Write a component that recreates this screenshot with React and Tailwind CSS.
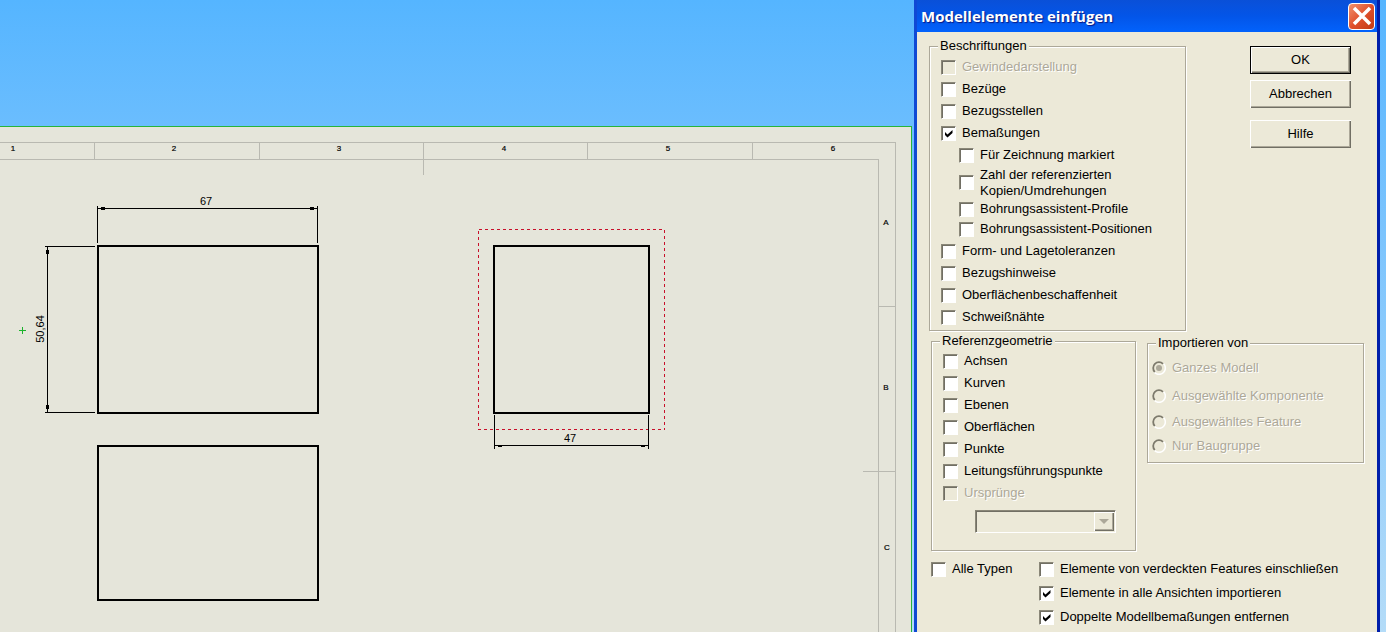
import React from 'react';

const raised = 'bg-[#ece9d8] shadow-[inset_1px_1px_0_#ffffff,inset_-1px_-1px_0_#716f64,inset_-2px_-2px_0_#aca899]';

const CheckRow = ({ id, label, checked, disabled, className = 'h-[22px]' }) => (
  <div className={`flex items-center gap-1.5 ${className}`}>
    <span className="relative flex shrink-0">
      <input
        id={id}
        type="checkbox"
        defaultChecked={checked}
        disabled={disabled}
        className="peer size-[15px] appearance-none border border-t-[#8a8778] border-l-[#8a8778] border-r-white border-b-white bg-white shadow-[inset_1px_1px_0_#716f64] disabled:bg-[#ece9d8]"
      />
      <svg viewBox="0 0 15 15" className="pointer-events-none absolute inset-0 hidden size-[15px] peer-checked:block">
        <path d="M4 6v3l2.500 2.500L11.500 7V4L6.500 8.500Z" fill="#000" />
      </svg>
    </span>
    <label
      htmlFor={id}
      className={disabled ? 'text-[#aca899] [text-shadow:1px_1px_0_#fff]' : 'text-black'}
    >
      {label}
    </label>
  </div>
);

const RadioRow = ({ id, label, checked, className }) => (
  <div className={`flex items-center gap-1.5 ${className}`}>
    <span className="relative flex shrink-0">
      <input id={id} name="import" type="radio" defaultChecked={checked} disabled className="peer size-3.5 appearance-none rounded-full" />
      <svg viewBox="0 0 14 14" className="pointer-events-none absolute inset-0 size-3.5" fill="none">
        <path d="M11.500 2.500A6.200 6.200 0 0 1 2.500 11.500" stroke="#fff" strokeWidth="1.500" />
        <path d="M2.800 11A5.800 5.800 0 0 1 11 2.800" stroke="#7d7a6c" strokeWidth="1.800" />
        {checked && <circle cx="7" cy="7" r="3" fill="#aca899" />}
      </svg>
    </span>
    <label htmlFor={id} className="text-[#aca899] [text-shadow:1px_1px_0_#fff]">{label}</label>
  </div>
);

const Group = ({ title, className, children }) => (
  <fieldset className={`border border-[#aca899] shadow-[1px_1px_0_#fff,inset_1px_1px_0_#fff] ${className}`}>
    <legend className="ml-2 bg-[#ece9d8] px-0.5 leading-4">{title}</legend>
    {children}
  </fieldset>
);

const columns = [
  ['1', 13], ['2', 174], ['3', 339], ['4', 504], ['5', 668], ['6', 833],
];

const Drawing = () => (
  <svg className="block h-full w-full" fontFamily="Liberation Sans, sans-serif" shapeRendering="crispEdges">
    {/* Sheet frame */}
    <g fill="none" stroke="#b9b9b1">
      <path d="M0 15.500H895.500V506M0 32.500H878.500V506" />
      <path d="M94.500 15V32M259.500 15V32M423.500 15V48M587.500 15V32M752.500 15V32" />
      <path d="M878 179.500H895M863 344.500H895" />
    </g>
    <g fontSize="8" textAnchor="middle" stroke="#000" strokeWidth="0.200">
      {columns.map(([name, x]) => <text key={name} x={x} y="24">{name}</text>)}
      <text x="886" y="98">A</text>
      <text x="886" y="263">B</text>
      <text x="887" y="423">C</text>
    </g>

    {/* Views */}
    <g fill="none" stroke="#000" strokeWidth="2">
      <rect x="98" y="119" width="220" height="167" />
      <rect x="98" y="319" width="220" height="154" />
      <rect x="494" y="119" width="155" height="167" />
    </g>
    <rect x="478.500" y="102.500" width="186" height="200" fill="none" stroke="#c8102a" strokeDasharray="3 3" />

    {/* Dimensions */}
    <g stroke="#000" fill="none">
      <path d="M97.500 79V116M317.500 79V116M97 81.500H318" />
      <path d="M45 119.500H95M45 285.500H95M47.500 119V286" />
      <path d="M494.500 288V322M648.500 288V322M494 318.500H649" />
      <path d="M101 81.500H105M310 81.500H314M47.500 123V127M47.500 278V282" strokeWidth="3" />
      <path d="M498 319.500H502M641 319.500H645" />
    </g>
    <g fontSize="11" textAnchor="middle">
      <text x="206" y="78">67</text>
      <text x="570" y="315">47</text>
      <text transform="translate(44 202) rotate(-90)">50,64</text>
    </g>
    <path d="M19 203.500H26M22.500 200V207" stroke="#1cb32c" />
  </svg>
);

const App = () => (
  <div className="flex h-screen overflow-hidden bg-linear-to-b from-[#55b5ff] to-[#b4dcf8] font-['Liberation_Sans',sans-serif] text-[13px] leading-4 text-black">
    <main className="mr-0.5 flex min-w-0 flex-1 flex-col pt-[126px]">
      <div className="min-h-0 flex-1 border-t border-r border-[#27b43a] bg-[#e5e5da]">
        <Drawing />
      </div>
    </main>

    <section className="mr-1.5 flex w-[466px] shrink-0 flex-col border-x-3 border-l-[#0f49d4] border-r-[#001eaa] bg-[#ece9d8]">
      <header className="flex h-8 shrink-0 items-center justify-between bg-linear-to-b from-[#0a50d8] via-[#0355e8] to-[#0262fc] pr-0.5 pl-1">
        <h1 className="font-['Open_Sans',sans-serif] text-[15px] font-bold text-white [text-shadow:1px_1px_1px_#0a1883]">
          Modellelemente einfügen
        </h1>
        <button aria-label="Schließen" className="flex size-[27px] items-center justify-center rounded border border-white bg-linear-to-br from-[#f0906c] via-[#e0502c] to-[#c23a12]">
          <svg viewBox="0 0 20 20" className="size-5" stroke="#fff" strokeWidth="3.500">
            <path d="M2 2L18 18M18 2L2 18" />
          </svg>
        </button>
      </header>

      <div className="flex justify-between pt-1.5 pr-[26px] pl-3">
        <Group title="Beschriftungen" className="h-[293px] w-[257px]">
          <div className="pt-0.5 pl-[11px]">
            <CheckRow id="thread" label="Gewindedarstellung" disabled />
            <CheckRow id="datum" label="Bezüge" />
            <CheckRow id="targets" label="Bezugsstellen" />
            <CheckRow id="dims" label="Bemaßungen" checked />
            <div className="pb-px pl-[18px]">
              <CheckRow id="marked" label="Für Zeichnung markiert" />
              <CheckRow
                id="instances"
                label={<>Zahl der referenzierten<br />Kopien/Umdrehungen</>}
                className="h-[33px]"
              />
              <CheckRow id="profiles" label="Bohrungsassistent-Profile" className="h-5" />
              <CheckRow id="positions" label="Bohrungsassistent-Positionen" className="h-5" />
            </div>
            <CheckRow id="tolerances" label="Form- und Lagetoleranzen" />
            <CheckRow id="notes" label="Bezugshinweise" />
            <CheckRow id="finish" label="Oberflächenbeschaffenheit" />
            <CheckRow id="welds" label="Schweißnähte" />
          </div>
        </Group>
        <div className="flex w-[101px] flex-col pt-2">
          <button className="h-7 border border-black bg-[#ece9d8] shadow-[inset_1px_1px_0_#fff,inset_-1px_-1px_0_#716f64,inset_-2px_-2px_0_#aca899]">OK</button>
          <button className={`mt-1.5 h-7 ${raised}`}>Abbrechen</button>
          <button className={`mt-3 h-7 ${raised}`}>Hilfe</button>
        </div>
      </div>

      <div className="flex items-start justify-between pt-0.5 pr-[13px] pl-3.5">
        <Group title="Referenzgeometrie" className="h-[218px] w-[205px]">
          <div className="pt-px pl-[11px]">
            <CheckRow id="axes" label="Achsen" />
            <CheckRow id="curves" label="Kurven" />
            <CheckRow id="planes" label="Ebenen" />
            <CheckRow id="surfaces" label="Oberflächen" />
            <CheckRow id="points" label="Punkte" />
            <CheckRow id="routing" label="Leitungsführungspunkte" />
            <CheckRow id="origins" label="Ursprünge" disabled />
            <div className="relative mt-1.5 ml-8 h-[23px] w-[141px]">
              <select aria-label="Ursprünge" disabled className="h-full w-full appearance-none border border-t-[#8a8778] border-l-[#8a8778] border-r-white border-b-white bg-[#ece9d8] shadow-[inset_1px_1px_0_#716f64]" />
              <span className={`pointer-events-none absolute top-0.5 right-0.5 flex h-[19px] w-5 items-center justify-center ${raised}`}>
                <svg viewBox="0 0 10 5" className="h-[5px] w-2.5" fill="#aca899"><path d="M0 0H10L5 5Z" /></svg>
              </span>
            </div>
          </div>
        </Group>
        <Group title="Importieren von" className="mt-0.5 h-[128px] w-[217px]">
          <div className="pl-1">
            <RadioRow id="model" label="Ganzes Modell" checked className="h-[34px]" />
            <RadioRow id="component" label="Ausgewählte Komponente" className="h-[22px]" />
            <RadioRow id="feature" label="Ausgewähltes Feature" className="h-[30px]" />
            <RadioRow id="assembly" label="Nur Baugruppe" className="h-[18px]" />
          </div>
        </Group>
      </div>

      <div className="flex items-start pt-1.5 pl-3.5">
        <CheckRow id="all" label="Alle Typen" className="h-6 w-[108px]" />
        <div>
          <CheckRow id="hidden" label="Elemente von verdeckten Features einschließen" className="h-6" />
          <CheckRow id="views" label="Elemente in alle Ansichten importieren" checked className="h-6" />
          <CheckRow id="duplicates" label="Doppelte Modellbemaßungen entfernen" checked className="h-6" />
        </div>
      </div>
    </section>
  </div>
);

export default App;
